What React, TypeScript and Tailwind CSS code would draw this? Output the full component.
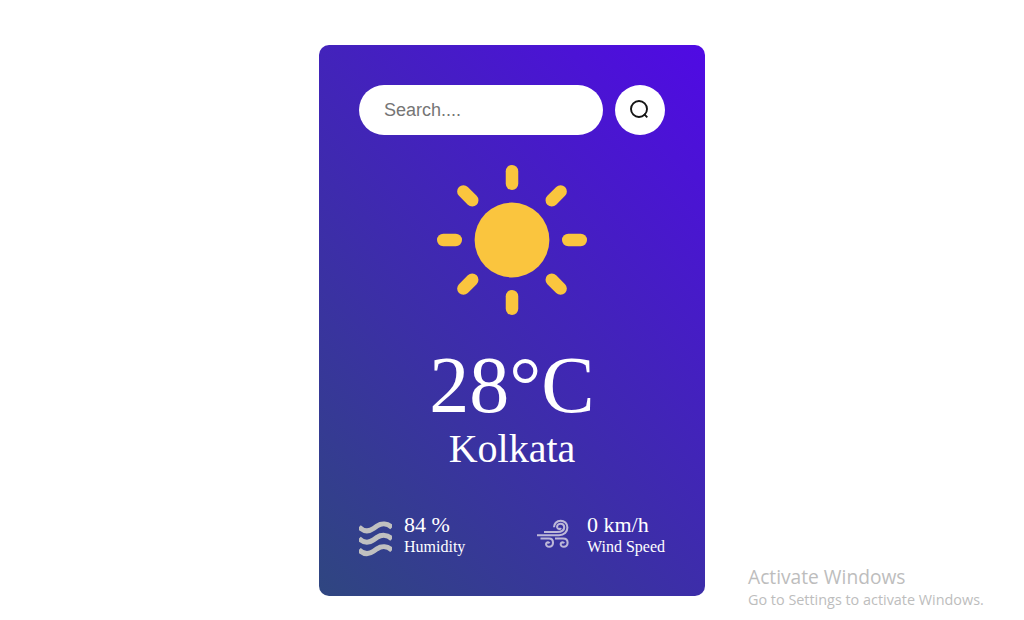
import React from "react";

const rays = [0, 45, 90, 135, 180, 225, 270, 315];

function Sun() {
  return (
    <svg className="mx-auto mt-[30px] block h-[150px] w-[150px]" viewBox="0 0 150 150" fill="#fac53e">
      <circle cx="75" cy="75" r="37.4" />
      {rays.map((angle) => (
        <rect key={angle} x="68.75" y="0" width="12.5" height="25" rx="6.25" transform={`rotate(${angle} 75 75)`} />
      ))}
    </svg>
  );
}

function SearchIcon() {
  return (
    <svg className="mr-0.5 mb-0.5 h-5 w-5" viewBox="0 0 20 20" fill="none" stroke="#141414" strokeWidth="1.9">
      <circle cx="10" cy="10" r="8" />
      <path d="M15 15L18.3 18.3" />
    </svg>
  );
}

function HumidityIcon() {
  return (
    <svg className="mt-2 h-9 w-[33px] shrink-0" viewBox="0 0 33 36" fill="none" stroke="#c0c0c0" strokeWidth="5">
      {[0, 11.4, 22.8].map((y) => (
        <path key={y} transform={`translate(0 ${y})`} d="M0 6C4.5 10.5 9.5 11 14.5 7.5L18 5C22.5 2 28.5 2.2 33 6.5" />
      ))}
    </svg>
  );
}

function WindIcon() {
  return (
    <svg className="mt-1.5 h-[30px] w-8 shrink-0" viewBox="0 0 32 30" fill="none" stroke="#bdb8d8" strokeWidth="2.1">
      <path d="M7 13H20C24 13 27.2 11.5 27.2 8.3C27.2 5.8 25.5 4.7 23.5 4.7C21 4.7 19.7 6.5 20.2 8.5C20.8 10.3 23.2 10.4 23.9 9" />
      <path d="M0 16.3H22C27 16.3 30.4 13 30.4 8.5C30.4 4.3 27.2 1.7 23.7 1.7C19.5 1.7 17 4.8 17 8.2" />
      <path d="M3.5 19.5H12C14.8 19.5 16 21.5 16 23.8C16 26.3 14.2 27.8 12.3 27.8C10 27.8 8.8 26.3 9.1 24.8C9.5 23.2 11.7 22.8 12.5 24.3" />
      <path d="M18 19.5H26C29.2 19.5 30.6 21.5 30.6 23.8C30.6 26.3 28.8 27.8 26.9 27.8C24.6 27.8 23.4 26.3 23.7 24.8C24.1 23.2 26.3 22.8 27.1 24.3" />
    </svg>
  );
}

export default function App() {
  return (
    <div className="relative flex h-[620px] w-full items-start justify-center overflow-hidden bg-white pt-[45px]">
      <main className="h-[551px] w-[386px] rounded-[10px] bg-[linear-gradient(45deg,#2f4680,#500ae4)] p-10 font-['Liberation_Serif',serif] text-white">
        <div className="flex justify-between">
          <input
            type="text"
            placeholder="Search...."
            className="h-[50px] w-[244px] rounded-full bg-white px-[25px] font-['Liberation_Sans',sans-serif] text-lg text-[#555555] outline-none placeholder:text-[#757575]"
          />
          <button aria-label="Search" className="flex h-[50px] w-[50px] items-center justify-center rounded-full bg-white">
            <SearchIcon />
          </button>
        </div>
        <Sun />
        <h1 className="mt-[30px] text-center text-[80px] leading-[80px]">28°C</h1>
        <h2 className="text-center text-[40px] leading-[48px]">Kolkata</h2>
        <div className="mt-10 flex justify-between">
          <div className="flex gap-3">
            <HumidityIcon />
            <div>
              <p className="text-[22px] leading-6">84 %</p>
              <p className="text-base leading-[19px]">Humidity</p>
            </div>
          </div>
          <div className="flex gap-[18px]">
            <WindIcon />
            <div>
              <p className="text-[22px] leading-6">0 km/h</p>
              <p className="text-base leading-[19px]">Wind Speed</p>
            </div>
          </div>
        </div>
      </main>
      <aside className="absolute top-[564px] left-[748px] font-['Open_Sans',sans-serif] whitespace-nowrap text-[#bdbdbd]">
        <p className="text-[19.2px] leading-[26px]">Activate Windows</p>
        <p className="text-[14.4px] leading-5">Go to Settings to activate Windows.</p>
      </aside>
    </div>
  );
}
